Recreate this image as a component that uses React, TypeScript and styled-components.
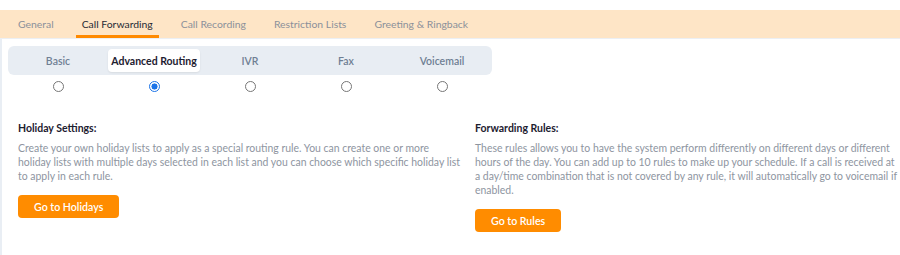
import styled, { createGlobalStyle } from "styled-components";

const GlobalStyle = createGlobalStyle`
  body {
    margin: 0;
    background: #fff;
    font-family: Lato, "Open Sans", sans-serif;
  }
`;

const Page = styled.div`
  width: 900px;
  height: 255px;
  padding-top: 10px;
  box-sizing: border-box;
`;

const TabBar = styled.nav`
  display: flex;
  height: 28px;
  background: #fee5c6;
  border-bottom: 1px solid #eceff3;
  padding-left: 12px;
`;

const Tab = styled.div<{ $active?: boolean }>`
  display: flex;
  align-items: center;
  padding: 3px 6px 0;
  margin-right: 16px;
  font-size: 10.4px;
  color: ${(p) => (p.$active ? "#262a35" : "#8b909a")};
  border-bottom: 3px solid ${(p) => (p.$active ? "#ff8a00" : "transparent")};
  box-sizing: border-box;
`;

const Body = styled.div`
  border-left: 2px solid #e9eef4;
  height: 216px;
  box-sizing: border-box;
`;

const ModeBlock = styled.div`
  width: 484px;
  margin-left: 6px;
  padding-top: 7px;
`;

const Segmented = styled.div`
  display: grid;
  grid-template-columns: repeat(5, 1fr);
  height: 29px;
  padding: 3px 2px;
  box-sizing: border-box;
  background: #e8edf3;
  border-radius: 6px;
`;

const Segment = styled.div<{ $active?: boolean }>`
  display: flex;
  align-items: center;
  justify-content: center;
  border-radius: 4px;
  font-size: 10.5px;
  font-weight: ${(p) => (p.$active ? 700 : 600)};
  color: ${(p) => (p.$active ? "#1d2030" : "#6f7f93")};
  background: ${(p) => (p.$active ? "#fff" : "transparent")};
  box-shadow: ${(p) => (p.$active ? "0 1px 2px rgba(0,0,0,0.08)" : "none")};
  margin: 0 2px;
`;

const Radios = styled.div`
  display: grid;
  grid-template-columns: repeat(5, 1fr);
  padding: 6px 2px 0;
`;

const Radio = styled.span<{ $checked?: boolean }>`
  justify-self: center;
  width: 11px;
  height: 11px;
  box-sizing: border-box;
  border-radius: 50%;
  border: ${(p) => (p.$checked ? "1.5px solid #1a73e8" : "1px solid #767676")};
  background: ${(p) =>
    p.$checked ? "radial-gradient(circle, #1a73e8 0 2.8px, #fff 3.3px)" : "#fff"};
`;

const Columns = styled.div`
  display: grid;
  grid-template-columns: 457px 1fr;
  padding: 29px 2px 0 16px;
`;

const Section = styled.section<{ $gutter?: number }>`
  padding-right: ${(p) => p.$gutter ?? 0}px;
`;

const Heading = styled.h4`
  margin: 0 0 6px;
  font-size: 10.5px;
  font-weight: 700;
  color: #1d2030;
  line-height: 14px;
`;

const Text = styled.p`
  margin: 0;
  font-size: 10.45px;
  line-height: 14px;
  color: #8e959f;
`;

const Button = styled.button`
  margin-top: 12px;
  height: 23px;
  padding: 0 16px;
  border: none;
  border-radius: 4px;
  background: #ff8c00;
  color: #fff;
  font-family: inherit;
  font-size: 10.6px;
  font-weight: 600;
  cursor: pointer;
`;

const tabs = ["General", "Call Forwarding", "Call Recording", "Restriction Lists", "Greeting & Ringback"];
const modes = ["Basic", "Advanced Routing", "IVR", "Fax", "Voicemail"];

export default function App() {
  const active = 1;
  return (
    <>
      <GlobalStyle />
      <Page>
        <TabBar>
          {tabs.map((t, i) => (
            <Tab key={t} $active={i === 1}>
              {t}
            </Tab>
          ))}
        </TabBar>
        <Body>
          <ModeBlock>
            <Segmented>
              {modes.map((m, i) => (
                <Segment key={m} $active={i === active}>
                  {m}
                </Segment>
              ))}
            </Segmented>
            <Radios>
              {modes.map((m, i) => (
                <Radio key={m} $checked={i === active} />
              ))}
            </Radios>
          </ModeBlock>
          <Columns>
            <Section $gutter={14}>
              <Heading>Holiday Settings:</Heading>
              <Text>
                Create your own holiday lists to apply as a special routing rule. You can create one or more
                holiday lists with multiple days selected in each list and you can choose which specific holiday
                list to apply in each rule.
              </Text>
              <Button>Go to Holidays</Button>
            </Section>
            <Section>
              <Heading>Forwarding Rules:</Heading>
              <Text>
                These rules allows you to have the system perform differently on different days or different
                hours of the day. You can add up to 10 rules to make up your schedule. If a call is received at a
                day/time combination that is not covered by any rule, it will automatically go to voicemail if
                enabled.
              </Text>
              <Button>Go to Rules</Button>
            </Section>
          </Columns>
        </Body>
      </Page>
    </>
  );
}
